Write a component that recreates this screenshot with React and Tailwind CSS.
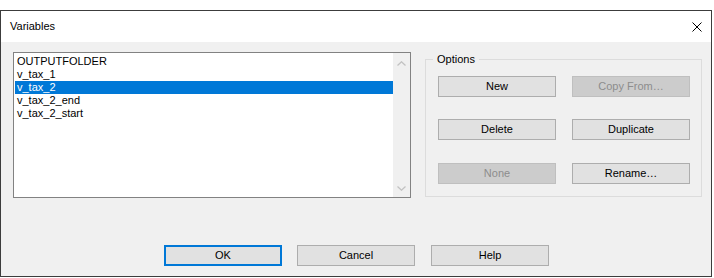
import React from "react";

function Btn({ children, disabled, primary }) {
  if (disabled) {
    return (
      <div className="w-[118px] h-[21px] border border-[#bfbfbf] bg-[#cccccc] text-[#8d8d8d] flex items-center justify-center">
        {children}
      </div>
    );
  }
  if (primary) {
    return (
      <div className="w-[118px] h-[21px] border-2 border-[#0078d7] bg-[#e1e1e1] text-black flex items-center justify-center">
        {children}
      </div>
    );
  }
  return (
    <div className="w-[118px] h-[21px] border border-[#adadad] bg-[#e1e1e1] text-black flex items-center justify-center">
      {children}
    </div>
  );
}

const items = ["OUTPUTFOLDER", "v_tax_1", "v_tax_2", "v_tax_2_end", "v_tax_2_start"];

export default function App() {
  return (
    <div className="w-[714px] h-[278px] bg-white pt-[10px] font-['Liberation_Sans',Arial,sans-serif] text-[11px] text-black">
      <div className="w-[712px] h-[267px] border border-[#3c3c3c] flex flex-col">
        <div className="h-[31px] shrink-0 bg-white flex items-center justify-between pl-[9px] pr-[9px]">
          <span className="text-[11px]">Variables</span>
          <svg width="10" height="10" viewBox="0 0 10 10" className="block">
            <path d="M0.5 0.5 L9.5 9.5 M9.5 0.5 L0.5 9.5" stroke="#000" strokeWidth="1" fill="none" />
          </svg>
        </div>
        <div className="flex-1 bg-[#f0f0f0] flex flex-col">
          <div className="flex items-start pl-[12px] pt-[10px]">
            <div className="w-[398px] h-[146px] border border-[#828282] bg-white flex">
              <div className="flex-1 pt-[2px] pl-[1px]">
                {items.map((it, i) => (
                  <div
                    key={it}
                    className={
                      i === 2
                        ? "h-[13px] leading-[13px] pl-[2px] bg-[#0078d7] text-white"
                        : "h-[13px] leading-[13px] pl-[2px]"
                    }
                  >
                    {it}
                  </div>
                ))}
              </div>
              <div className="w-[17px] bg-[#f0f0f0] flex flex-col justify-between">
                <div className="h-[17px] flex items-center justify-center pt-[3px]">
                  <svg width="9" height="5" viewBox="0 0 9 5" className="block">
                    <path d="M0.5 4.5 L4.5 0.8 L8.5 4.5" stroke="#c2c2c2" strokeWidth="1.3" fill="none" />
                  </svg>
                </div>
                <div className="h-[17px] flex items-center justify-center pb-[1px]">
                  <svg width="9" height="5" viewBox="0 0 9 5" className="block">
                    <path d="M0.5 0.5 L4.5 4.2 L8.5 0.5" stroke="#c2c2c2" strokeWidth="1.3" fill="none" />
                  </svg>
                </div>
              </div>
            </div>
            <div className="relative ml-[14px] mt-[7px] w-[277px] h-[138px] border border-[#dcdcdc] pl-[12px] pt-[16px]">
              <span className="absolute -top-[8px] left-[7px] bg-[#f0f0f0] px-[4px] leading-[14px]">Options</span>
              <div className="grid grid-cols-[118px_118px] gap-x-[16px]">
                <Btn>New</Btn>
                <Btn disabled>Copy From…</Btn>
              </div>
              <div className="grid grid-cols-[118px_118px] gap-x-[16px] mt-[22px]">
                <Btn>Delete</Btn>
                <Btn>Duplicate</Btn>
              </div>
              <div className="grid grid-cols-[118px_118px] gap-x-[16px] mt-[23px]">
                <Btn disabled>None</Btn>
                <Btn>Rename…</Btn>
              </div>
            </div>
          </div>
          <div className="flex pl-[163px] mt-[47px]">
            <Btn primary>OK</Btn>
            <div className="ml-[15px]">
              <Btn>Cancel</Btn>
            </div>
            <div className="ml-[16px]">
              <Btn>Help</Btn>
            </div>
          </div>
        </div>
      </div>
    </div>
  );
}
